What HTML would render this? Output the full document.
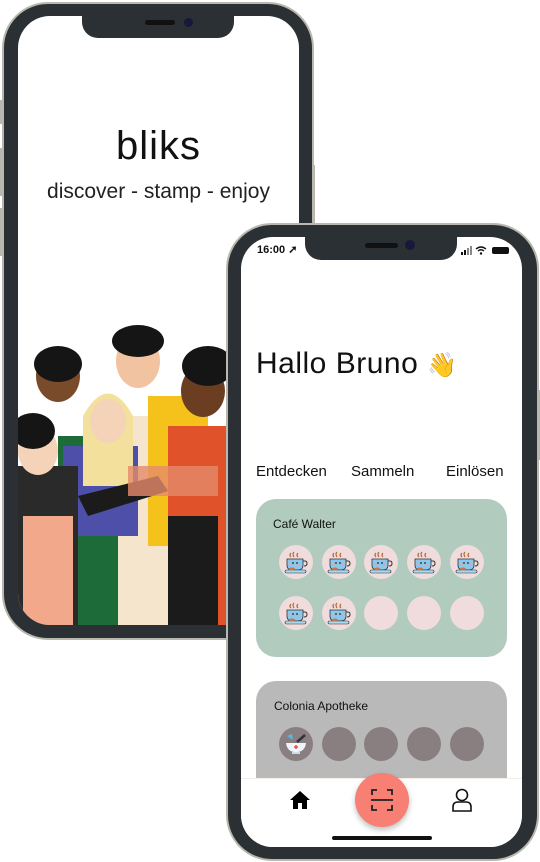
<!DOCTYPE html>
<html><head><meta charset="utf-8"><style>
*{margin:0;padding:0;box-sizing:border-box}
body{width:540px;height:862px;background:#fff;position:relative;overflow:hidden;font-family:"Liberation Sans",sans-serif;color:#111}
.abs{position:absolute}
.phone{position:absolute;background:#2a3033;border:2px solid #b8b8ae;border-radius:46px}
.screen{position:absolute;background:#fff;border-radius:32px;overflow:hidden}
.notch{position:absolute;background:#2a3033;border-radius:0 0 16px 16px}
.c{position:absolute;width:34px;height:34px;border-radius:50%}
.p{background:#f0dcdc}.g{background:#8a7f80}
.c svg{position:absolute;left:5px;top:5px}
</style></head><body>
<svg width="0" height="0" style="position:absolute"><defs>
<g id="cup"><path d="M7 3q-2 2 0 4M10 2q-2 2 0 5M14 3q-2 2 0 4" stroke="#b0663a" stroke-width="1.2" fill="none"/><path d="M3 9H19V15Q19 20 14 20H8Q3 20 3 15Z" fill="#8cc8ec" stroke="#333" stroke-width=".8"/><path d="M19 11H21Q23 11 23 13.5Q23 16 20 16" fill="none" stroke="#333" stroke-width="1"/><rect x="1" y="20" width="21" height="3" rx="1.5" fill="#a8d8f2" stroke="#333" stroke-width=".6"/><ellipse cx="8" cy="19" rx="3" ry="1.5" fill="#c8773d"/><circle cx="9" cy="13" r=".9" fill="#222"/><circle cx="13" cy="13" r=".9" fill="#222"/><circle cx="7" cy="14.5" r="1" fill="#f29ab0"/><circle cx="15" cy="14.5" r="1" fill="#f29ab0"/></g>
</defs></svg>
<div class="abs" style="left:0;top:100px;width:3px;height:24px;background:#b8b8ae"></div>
<div class="abs" style="left:0;top:148px;width:3px;height:48px;background:#b8b8ae"></div>
<div class="abs" style="left:0;top:208px;width:3px;height:48px;background:#b8b8ae"></div>
<div class="abs" style="left:312px;top:165px;width:3px;height:70px;background:#b8b8ae"></div>
<div class="abs" style="left:537px;top:390px;width:3px;height:70px;background:#b8b8ae"></div>

<div class="phone" style="left:2px;top:2px;width:312px;height:638px"></div>
<div class="screen" style="left:18px;top:16px;width:281px;height:609px">
  <div class="abs" style="left:0;width:281px;top:108px;text-align:center;font-size:40px;letter-spacing:1px">bliks</div>
  <div class="abs" style="left:0;width:281px;top:164px;text-align:center;font-size:21px;color:#222">discover - stamp - enjoy</div>
  <svg class="abs" style="left:0;top:300px" width="281" height="309" viewBox="0 0 281 309">
    <rect x="90" y="100" width="80" height="209" fill="#f6e5cd"/>
    <rect x="40" y="120" width="60" height="189" fill="#1e6b3a"/>
    <rect x="130" y="80" width="60" height="150" fill="#f4c21a"/>
    <rect x="150" y="110" width="60" height="199" fill="#e0522a"/>
    <rect x="150" y="200" width="50" height="109" fill="#1b1b1b"/>
    <rect x="45" y="130" width="75" height="90" fill="#4d4fa8"/>
    <rect x="0" y="150" width="60" height="159" fill="#2a2a2a"/>
    <rect x="5" y="200" width="50" height="109" fill="#f2a88b"/>
    <ellipse cx="40" cy="60" rx="22" ry="26" fill="#7a4b2a"/>
    <ellipse cx="40" cy="48" rx="24" ry="18" fill="#151515"/>
    <ellipse cx="120" cy="45" rx="22" ry="27" fill="#f2c3a0"/>
    <ellipse cx="120" cy="25" rx="26" ry="16" fill="#151515"/>
    <ellipse cx="185" cy="75" rx="22" ry="26" fill="#6b3e22"/>
    <ellipse cx="190" cy="50" rx="26" ry="20" fill="#151515"/>
    <path d="M65 100 Q90 55 115 100 L115 170 L65 170Z" fill="#f2e09c"/>
    <ellipse cx="90" cy="105" rx="18" ry="22" fill="#f4d3b8"/>
    <ellipse cx="20" cy="135" rx="20" ry="24" fill="#f4d3b8"/>
    <ellipse cx="15" cy="115" rx="22" ry="18" fill="#151515"/>
    <path d="M60 180 L140 160 L150 175 L70 200Z" fill="#1b1b1b"/>
    <path d="M110 150 L200 150 L200 180 L110 180Z" fill="#e58b6a" opacity=".8"/>
  </svg>
</div>
<div class="notch" style="left:82px;top:16px;width:152px;height:22px"></div>
<div class="abs" style="left:145px;top:20px;width:30px;height:5px;border-radius:3px;background:#111"></div>
<div class="abs" style="left:184px;top:18px;width:9px;height:9px;border-radius:50%;background:#151a3a"></div>

<div class="phone" style="left:226px;top:223px;width:313px;height:638px"></div>
<div class="screen" style="left:241px;top:237px;width:281px;height:610px">
  <div class="abs" style="left:16px;top:6px;font-size:11px;font-weight:bold">16:00 ➚</div>
  <svg class="abs" style="left:220px;top:8px" width="52" height="10" viewBox="0 0 52 10"><rect x="0" y="7" width="2" height="3" fill="#111"/><rect x="3" y="5" width="2" height="5" fill="#111"/><rect x="6" y="3" width="2" height="7" fill="#888"/><rect x="9" y="1" width="2" height="9" fill="#888"/><path d="M15 4Q20 0 25 4M17 6Q20 3.5 23 6" stroke="#111" stroke-width="1.4" fill="none"/><circle cx="20" cy="8.5" r="1.2" fill="#111"/><rect x="31" y="2" width="17" height="7" rx="2" fill="#111"/></svg>
  <div class="abs" style="left:15px;top:110px;font-size:30px;letter-spacing:.5px">Hallo Bruno <span style="font-size:24px">👋</span></div>
  <div class="abs" style="left:15px;top:226px;font-size:15px">Entdecken</div>
  <div class="abs" style="left:110px;top:226px;font-size:15px">Sammeln</div>
  <div class="abs" style="left:205px;top:226px;font-size:15px">Einlösen</div>
  <div class="abs" style="left:15px;top:262px;width:251px;height:158px;border-radius:20px;background:#b2cbbf">
    <div class="abs" style="left:17px;top:18px;font-size:12px">Café Walter</div>
  </div>
  <div class="abs" style="left:15px;top:444px;width:251px;height:160px;border-radius:20px;background:#b9b9b9">
    <div class="abs" style="left:18px;top:18px;font-size:12px">Colonia Apotheke</div>
  </div>
  <div class="abs" style="left:0;top:541px;width:281px;height:69px;background:#fff;border-top:1px solid #f5eee6"></div>
  <svg class="abs" style="left:48px;top:553px" width="22" height="20" viewBox="0 0 22 20"><path d="M11 1 L21 10 H18 V19 H13 V13 H9 V19 H4 V10 H1Z" fill="#000"/></svg>
  <div class="abs" style="left:114px;top:536px;width:54px;height:54px;border-radius:50%;background:#f77f74;box-shadow:0 3px 6px rgba(0,0,0,.25)"></div>
  <svg class="abs" style="left:129px;top:551px" width="24" height="24" viewBox="0 0 24 24" fill="none" stroke="#222" stroke-width="1.8"><path d="M2 7V2H7M17 2H22V7M22 17V22H17M7 22H2V17M1 12H23"/></svg>
  <svg class="abs" style="left:210px;top:551px" width="22" height="24" viewBox="0 0 22 24" fill="none" stroke="#111" stroke-width="1.6"><circle cx="11" cy="7" r="5.5"/><path d="M2 23V19Q2 14 7 14H15Q20 14 20 19V23Z"/></svg>
  <div class="abs" style="left:91px;top:599px;width:100px;height:4px;border-radius:2px;background:#111"></div>
</div>
<div class="notch" style="left:305px;top:237px;width:152px;height:23px"></div>
<div class="abs" style="left:365px;top:243px;width:33px;height:5px;border-radius:3px;background:#111"></div>
<div class="abs" style="left:405px;top:240px;width:10px;height:10px;border-radius:50%;background:#151a3a"></div>

<div class="c p" style="left:279px;top:545px"><svg width="24" height="24"><use href="#cup"/></svg></div>
<div class="c p" style="left:322px;top:545px"><svg width="24" height="24"><use href="#cup"/></svg></div>
<div class="c p" style="left:364px;top:545px"><svg width="24" height="24"><use href="#cup"/></svg></div>
<div class="c p" style="left:407px;top:545px"><svg width="24" height="24"><use href="#cup"/></svg></div>
<div class="c p" style="left:450px;top:545px"><svg width="24" height="24"><use href="#cup"/></svg></div>
<div class="c p" style="left:279px;top:596px"><svg width="24" height="24"><use href="#cup"/></svg></div>
<div class="c p" style="left:322px;top:596px"><svg width="24" height="24"><use href="#cup"/></svg></div>
<div class="c p" style="left:364px;top:596px"></div>
<div class="c p" style="left:407px;top:596px"></div>
<div class="c p" style="left:450px;top:596px"></div>
<div class="c g" style="left:279px;top:727px"><svg width="24" height="24" viewBox="0 0 24 24"><path d="M3 4L8 2L9 8Z" fill="#5ab8e0"/><path d="M13 10L21 3" stroke="#333" stroke-width="2.5"/><path d="M2 11H22Q21 19 14 20H10Q3 19 2 11Z" fill="#eef4fa"/><rect x="8" y="20" width="8" height="2" fill="#cfdde8"/><path d="M12 13V17M10 15H14" stroke="#e33" stroke-width="1.2"/></svg></div>
<div class="c g" style="left:322px;top:727px"></div>
<div class="c g" style="left:364px;top:727px"></div>
<div class="c g" style="left:407px;top:727px"></div>
<div class="c g" style="left:450px;top:727px"></div>
</body></html>
